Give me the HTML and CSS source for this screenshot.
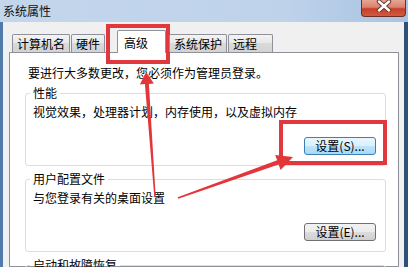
FILE: index.html
```html
<!DOCTYPE html>
<html lang="zh-CN">
<head>
  <meta charset="UTF-8">
  <title>系统属性</title>
  <link rel="stylesheet" href="styles.css">
</head>
<body>
  <div class="window">
    <div class="titlebar">
      <span class="title">系统属性</span>
      <div class="close">
        <svg width="16" height="12" viewBox="0 0 16 12">
          <path d="M3 1.5 L13 10.5 M13 1.5 L3 10.5" stroke="#6b3a32" stroke-width="4.5" stroke-linecap="round"/>
          <path d="M3 1.5 L13 10.5 M13 1.5 L3 10.5" stroke="#ffffff" stroke-width="2.4" stroke-linecap="round"/>
        </svg>
      </div>
    </div>

    <div class="client">
      <div class="tabs">
        <div class="tab">计算机名</div>
        <div class="tab">硬件</div>
        <div class="tab active">高级</div>
        <div class="tab">系统保护</div>
        <div class="tab last">远程</div>
      </div>

      <div class="panel">
        <p class="note">要进行大多数更改，您必须作为管理员登录。</p>

        <fieldset class="group">
          <legend>性能</legend>
          <p>视觉效果，处理器计划，内存使用，以及虚拟内存</p>
          <div class="actions">
            <button class="btn default">设置(S)...</button>
          </div>
        </fieldset>

        <fieldset class="group">
          <legend>用户配置文件</legend>
          <p>与您登录有关的桌面设置</p>
          <div class="actions">
            <button class="btn">设置(E)...</button>
          </div>
        </fieldset>

        <fieldset class="group">
          <legend>启动和故障恢复</legend>
          <p>系统启动、系统失败和调试信息</p>
        </fieldset>
      </div>
    </div>

    <!-- 标注：红框和箭头 -->
    <svg class="marks" width="408" height="267" viewBox="0 0 408 267">
      <rect x="108" y="26" width="60" height="36" fill="none" stroke="#e0383c" stroke-width="4"/>
      <rect x="281" y="122" width="104" height="41" fill="none" stroke="#e0383c" stroke-width="4"/>
      <polygon fill="#e2363a" points="146,72 153.9,83.5 148.9,83.9 155.7,197 154.3,197 144.9,84.1 139.9,84.5"/>
      <polygon fill="#e2363a" points="293,157 280.6,169.9 278.6,164.5 178.3,198.8 177.7,197.2 277.2,160.3 275.2,154.9"/>
    </svg>
  </div>
</body>
</html>
```

FILE: styles.css
```css
* {
  margin: 0;
  padding: 0;
  box-sizing: border-box;
}
body {
  font-family: "Noto Sans CJK SC", "Liberation Sans", sans-serif;
  font-size: 12px;
  color: #000000;
  background: #ffffff;
}
.window {
  position: relative;
  width: 408px;
  height: 267px;
  overflow: hidden;
  background: linear-gradient(90deg, #4f7bab, #6d93bd 50%, #2d4f78);
}
.titlebar {
  height: 22px;
  display: flex;
  align-items: flex-start;
  background: linear-gradient(90deg, #c3d6ec, #bed2ea 70%, #a9c3e2);
}
.title {
  margin: 4px 0 0 3px;
  line-height: 14px;
  color: #111111;
}
.close {
  margin-left: auto;
  margin-right: 2px;
  width: 45px;
  height: 17px;
  border: 1px solid #6a3028;
  border-top: none;
  border-radius: 0 0 4px 4px;
  background: linear-gradient(180deg, #e6a594 0%, #d9826c 45%, #c73f27 55%, #d25a3f 100%);
  display: flex;
  justify-content: center;
  align-items: flex-start;
}
.client {
  margin: 0 4px 0 3px;
  height: 245px;
  padding-top: 8px;
  background: #f0f0f0;
}
.tabs {
  display: flex;
  align-items: flex-end;
  padding-left: 9px;
  margin-bottom: -1px;
  position: relative;
  z-index: 1;
}
.tab {
  height: 18px;
  margin-bottom: 1px;
  margin-right: 1px;
  padding: 0 4px;
  line-height: 17px;
  border: 1px solid #8e9199;
  border-bottom: none;
  border-radius: 2px 2px 0 0;
  background: linear-gradient(180deg, #f4f4f4, #e6e6e6 50%, #dadada 50%, #d3d3d3);
}
.tab.active {
  height: 23px;
  margin: 0 3px 0 11px;
  padding: 4px 17px 0 6px;
  line-height: 16px;
  background: #ffffff;
}
.tab.last {
  padding-right: 15px;
}
.panel {
  margin: 0 5px 0 6px;
  height: 215px;
  padding: 0 12px 0 15px;
  border: 1px solid #8e9199;
  background: #ffffff;
}
.note {
  margin: 12px 0 0 3px;
  line-height: 16px;
}
.group {
  margin-top: 4px;
  padding: 3px 9px 10px 7px;
  border: 1px solid #d5dfe5;
  border-radius: 3px;
  min-width: 0;
}
.group + .group {
  margin-top: 5px;
}
.group legend {
  margin-left: -3px;
  padding: 0 3px;
  line-height: 16px;
}
.group p {
  line-height: 16px;
}
.actions {
  display: flex;
  justify-content: flex-end;
  margin-top: 17px;
}
.btn {
  width: 72px;
  height: 18px;
  font-family: inherit;
  font-size: 12px;
  line-height: 16px;
  color: #000000;
  border: 1px solid #707070;
  border-radius: 3px;
  background: linear-gradient(180deg, #f2f2f2 0%, #ebebeb 50%, #dddddd 50%, #cfcfcf 100%);
}
.btn.default {
  border-color: #3c7fb1;
  background: linear-gradient(180deg, #eaf6fd 0%, #d9f0fc 50%, #bee6fd 50%, #a7d9f5 100%);
}
.marks {
  position: absolute;
  left: 0;
  top: 0;
  pointer-events: none;
}
```
